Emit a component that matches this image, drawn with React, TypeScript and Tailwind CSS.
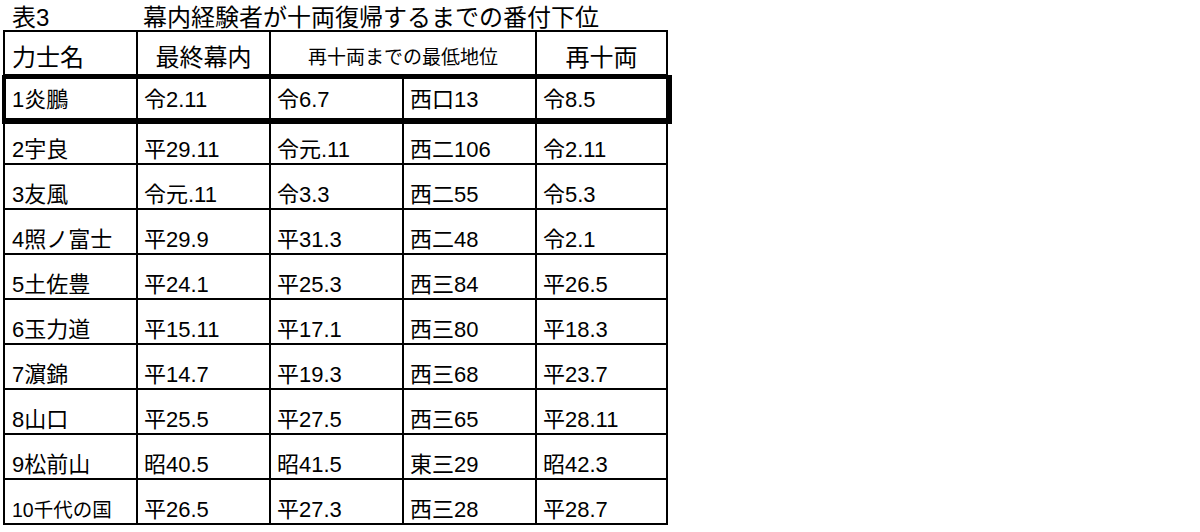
import React from "react";

const rows: string[][] = [
  ["1炎鵬", "令2.11", "令6.7", "西口13", "令8.5"],
  ["2宇良", "平29.11", "令元.11", "西二106", "令2.11"],
  ["3友風", "令元.11", "令3.3", "西二55", "令5.3"],
  ["4照ノ富士", "平29.9", "平31.3", "西二48", "令2.1"],
  ["5土佐豊", "平24.1", "平25.3", "西三84", "平26.5"],
  ["6玉力道", "平15.11", "平17.1", "西三80", "平18.3"],
  ["7濵錦", "平14.7", "平19.3", "西三68", "平23.7"],
  ["8山口", "平25.5", "平27.5", "西三65", "平28.11"],
  ["9松前山", "昭40.5", "昭41.5", "東三29", "昭42.3"],
  ["10千代の国", "平26.5", "平27.3", "西三28", "平28.7"],
];

export default function App() {
  return (
    <div className="w-[1200px] h-[532px] bg-white text-black font-['Liberation_Sans','Noto_Sans_CJK_JP',sans-serif] overflow-hidden">
      <div className="ml-[3px] w-[665px]">
        <div className="h-[30px] flex items-end text-[24px] leading-[24px]">
          <div className="w-[135px] pl-[9px]">表3</div>
          <div className="pl-[5px]">幕内経験者が十両復帰するまでの番付下位</div>
        </div>
        <div className="relative grid grid-cols-[133px_133px_133px_133px_131px] border-l-2 border-t-2 border-black">
          <div className="h-[44px] border-r-2 border-b-2 border-black flex items-end pl-[7px] pb-[4px] text-[24px] leading-[24px]">
            力士名
          </div>
          <div className="h-[44px] border-r-2 border-b-2 border-black flex items-end justify-center pb-[4px] text-[24px] leading-[24px]">
            最終幕内
          </div>
          <div className="col-span-2 h-[44px] border-r-2 border-b-2 border-black flex items-end justify-center pb-[4px] text-[19px] leading-[24px]">
            再十両までの最低地位
          </div>
          <div className="h-[44px] border-r-2 border-b-2 border-black flex items-end justify-center pb-[4px] text-[24px] leading-[24px]">
            再十両
          </div>
          {rows.map((r, i) =>
            r.map((c, j) => (
              <div
                key={`${i}-${j}`}
                className={`${i === 0 ? "h-[44px] pb-[6px]" : "h-[45px] pb-[1px]"} border-r-2 border-b-2 border-black flex items-end leading-[24px] ${
                  j === 0 ? "pl-[7px]" : "pl-[6px]"
                } ${i === 9 && j === 0 ? "text-[19.5px]" : "text-[22px]"}`}
              >
                {c}
              </div>
            ))
          )}
          <div className="absolute left-[-3px] top-[43px] w-[670px] h-[49px] border-4 border-black pointer-events-none" />
        </div>
      </div>
    </div>
  );
}
